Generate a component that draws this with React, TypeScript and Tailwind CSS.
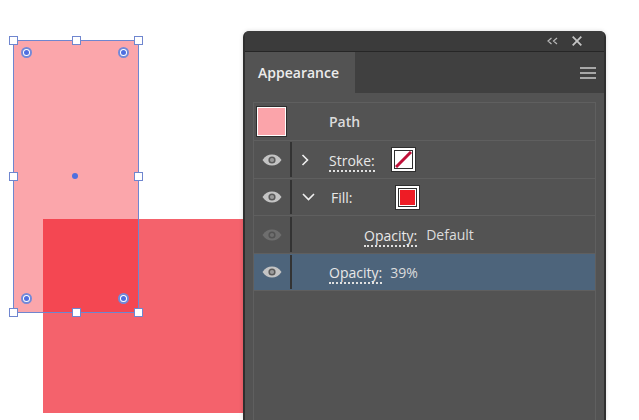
const font = { fontFamily: '"Open Sans", sans-serif' };

function Eye({ dim = false }: { dim?: boolean }) {
  const c = dim ? "#6e6e6e" : "#c4c4c4";
  return (
    <svg width="20" height="12" viewBox="0 0 20 12">
      <path d="M0.5 6C3 2.2 6.2 0.5 10 0.5S17 2.2 19.5 6C17 9.8 13.8 11.5 10 11.5S3 9.8 0.5 6Z" fill={c} />
      <circle cx="10" cy="6" r="3.6" fill={dim ? "#535353" : "#5a5a5a"} />
      <circle cx="10" cy="6" r="2.1" fill={dim ? "#6e6e6e" : "#9a9a9a"} />
    </svg>
  );
}

function Handle({ cls }: { cls: string }) {
  return <div className={`absolute w-[9px] h-[9px] bg-white border border-[#6f86cf] ${cls}`} />;
}

function Corner({ cls }: { cls: string }) {
  return (
    <div className={`absolute w-[11px] h-[11px] rounded-full bg-white border-2 border-[#7389d8] flex items-center justify-center ${cls}`}>
      <div className="w-[5px] h-[5px] rounded-full bg-[#4f6fe0]" />
    </div>
  );
}

function Label({ children }: { children: string }) {
  return <span className="text-[14px] leading-[17px] text-[#e8e8e8] border-b-2 border-dotted border-[#e0e0e0]">{children}</span>;
}

function Row({
  eye,
  dim,
  active,
  children,
  h,
}: {
  eye?: boolean;
  dim?: boolean;
  active?: boolean;
  h: string;
  children: React.ReactNode;
}) {
  return (
    <div className={`flex items-stretch border-b border-[#5f5f5f] ${h} ${active ? "bg-[#4d647b]" : ""}`}>
      {eye && (
        <>
          <div className="w-[36px] flex items-center justify-center">
            <Eye dim={dim} />
          </div>
          <div className="w-[2px] my-px bg-[#333333]" />
        </>
      )}
      <div className="flex-1 flex items-center relative">{children}</div>
    </div>
  );
}

export default function App() {
  return (
    <div className="relative w-[639px] h-[420px] bg-white overflow-hidden" style={font}>
      {/* Artwork */}
      <div className="absolute left-[43px] top-[219px] w-[210px] h-[194px] bg-[#f4626c]" />
      <div className="absolute left-[14px] top-[41px] w-[124px] h-[271px] bg-[#f5212e]/40" />

      {/* Selection */}
      <div className="absolute left-[13px] top-[40px] w-[126px] h-[273px] border border-[#6f86cf]">
        <Handle cls="left-[-5px] top-[-5px]" />
        <Handle cls="left-[58px] top-[-5px]" />
        <Handle cls="left-[120px] top-[-5px]" />
        <Handle cls="left-[-5px] top-[131px]" />
        <Handle cls="left-[120px] top-[131px]" />
        <Handle cls="left-[-5px] top-[267px]" />
        <Handle cls="left-[58px] top-[267px]" />
        <Handle cls="left-[120px] top-[267px]" />
        <Corner cls="left-[7px] top-[6px]" />
        <Corner cls="left-[104px] top-[6px]" />
        <Corner cls="left-[7px] top-[252px]" />
        <Corner cls="left-[104px] top-[252px]" />
        <div className="absolute left-[58px] top-[132px] w-[6px] h-[6px] rounded-full bg-[#4f6fe0]" />
      </div>

      {/* Panel */}
      <div className="absolute left-[243px] top-[31px] w-[363px] h-[389px] flex flex-col rounded-t-[6px] overflow-hidden border-x-2 border-[#2f2f2f] bg-[#535353] shadow-[0_0_4px_rgba(0,0,0,0.15)]">
        <div className="h-[20px] shrink-0 bg-[#3b3b3b] flex items-center justify-end gap-[14px] pr-[8px] -mx-[2px] px-0">
          <svg width="11" height="8" viewBox="0 0 11 8" fill="none" stroke="#b8b8b8" strokeWidth="1.2">
            <path d="M4.5 1L1 4l3.5 3M10 1L6.5 4 10 7" />
          </svg>
          <svg width="10" height="10" viewBox="0 0 10 10" fill="none" stroke="#c4c4c4" strokeWidth="1.8">
            <path d="M0.7 0.7l8.6 8.6M9.3 0.7L0.7 9.3" />
          </svg>
          <div className="w-[2px]" />
        </div>
        <div className="h-[1px] shrink-0 bg-[#262626]" />
        <div className="h-[41px] shrink-0 flex bg-[#404040]">
          <div className="w-[110px] bg-[#535353] flex items-center pl-[13px] pb-[1px] text-[14px] font-semibold text-[#ececec]">
            Appearance
          </div>
          <div className="flex-1 flex items-center justify-end pr-[8px]">
            <div className="w-[16px] flex flex-col gap-[3px]">
              <div className="h-[2px] bg-[#a8a8a8]" />
              <div className="h-[2px] bg-[#a8a8a8]" />
              <div className="h-[2px] bg-[#a8a8a8]" />
            </div>
          </div>
        </div>
        <div className="flex-1 pt-[9px] pl-[8px] pr-[8px]">
          <div className="h-full border-x border-t border-[#5f5f5f] flex flex-col">
            <Row h="h-[38px]">
              <div className="ml-[3px] w-[29px] h-[29px] bg-[#fba4aa] border border-white outline outline-1 outline-[#2e2e2e]" />
              <span className="ml-[43px] text-[14px] font-semibold text-[#dcdcdc]">Path</span>
            </Row>
            <Row eye h="h-[38px]">
              <svg className="ml-[9px]" width="9" height="12" viewBox="0 0 9 12" fill="none" stroke="#f0f0f0" strokeWidth="1.6">
                <path d="M1.5 1l5 5-5 5" />
              </svg>
              <span className="ml-[19px]"><Label>Stroke:</Label></span>
              <div className="ml-[16px] w-[25px] h-[25px] bg-white border border-[#2e2e2e] p-[2px]">
                <div className="w-full h-full border border-[#2e2e2e] bg-white">
                  <svg width="17" height="17" viewBox="0 0 17 17">
                    <path d="M1 16L16 1" stroke="#c00f38" strokeWidth="3" />
                  </svg>
                </div>
              </div>
            </Row>
            <Row eye h="h-[37px]">
              <svg className="ml-[10px]" width="13" height="8" viewBox="0 0 13 8" fill="none" stroke="#f0f0f0" strokeWidth="1.6">
                <path d="M1 1l5.5 5.5L12 1" />
              </svg>
              <span className="ml-[16px] text-[14px] text-[#e8e8e8]">Fill:</span>
              <div className="ml-[42px] w-[25px] h-[25px] bg-white border border-[#2e2e2e] p-[2px]">
                <div className="w-full h-full border border-[#2e2e2e] bg-white p-[1px]">
                  <div className="w-full h-full bg-[#ee1c25]" />
                </div>
              </div>
            </Row>
            <Row eye dim h="h-[38px]">
              <span className="ml-[72px]"><Label>Opacity:</Label></span>
              <span className="ml-[9px] text-[14px] text-[#dcdcdc]">Default</span>
            </Row>
            <Row eye active h="h-[37px]">
              <span className="ml-[37px]"><Label>Opacity:</Label></span>
              <span className="ml-[8px] text-[14px] text-[#dcdcdc]">39%</span>
            </Row>
          </div>
        </div>
      </div>
    </div>
  );
}
